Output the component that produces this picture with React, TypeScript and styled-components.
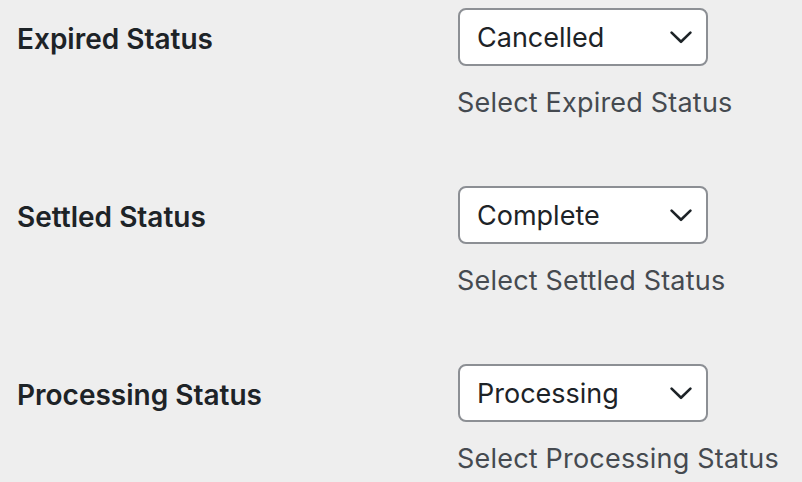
import React from 'react';
import styled, { createGlobalStyle } from 'styled-components';

const GlobalStyle = createGlobalStyle`
  html, body {
    margin: 0;
    padding: 0;
    background: #eeeeee;
  }
  body {
    font-family: Inter, "Noto Sans", "Liberation Sans", sans-serif;
    color: #1d2327;
  }
`;

interface StatusRow {
    label: string;
    value: string;
    description: string;
}

const rows: StatusRow[] = [
    { label: 'Expired Status', value: 'Cancelled', description: 'Select Expired Status' },
    { label: 'Settled Status', value: 'Complete', description: 'Select Settled Status' },
    { label: 'Processing Status', value: 'Processing', description: 'Select Processing Status' },
];

const Chevron = () => (
    <svg width="22" height="13" viewBox="0 0 22 13" fill="none" stroke="#1d2327" strokeWidth="2.6" strokeLinecap="round" strokeLinejoin="round">
        <path d="M1.6 1.6L11 10.8L20.4 1.6" />
    </svg>
);

const App = () => {
    return (
        <>
            <GlobalStyle />
            <FormTable>
                {rows.map((row, index) => (
                    <Row key={index}>
                        <Label>{row.label}</Label>
                        <Field>
                            <Select>
                                <SelectValue>{row.value}</SelectValue>
                                <Chevron />
                            </Select>
                            <Description>{row.description}</Description>
                        </Field>
                    </Row>
                ))}
            </FormTable>
        </>
    );
};

const FormTable = styled.div`
  display: flex;
  flex-direction: column;
  gap: 67px;
  padding: 8px 0 0 17px;
`;

const Row = styled.div`
  display: grid;
  grid-template-columns: 441px 1fr;
`;

const Label = styled.div`
  font-size: 28px;
  font-weight: 600;
  line-height: 58px;
  height: 58px;
  padding-top: 2px;
`;

const Field = styled.div`
  display: flex;
  flex-direction: column;
`;

const Select = styled.div`
  box-sizing: border-box;
  width: 250px;
  height: 58px;
  border: 2px solid #8c8f94;
  border-radius: 8px;
  background: #ffffff;
  display: flex;
  align-items: center;
  justify-content: space-between;
  padding: 0 14px 0 17px;
`;

const SelectValue = styled.span`
  font-size: 27px;
  color: #1d2327;
`;

const Description = styled.p`
  margin: 21px 0 0 -1px;
  font-size: 27px;
  line-height: 32px;
  letter-spacing: 0.2px;
  color: #454a50;
`;

export default App;
